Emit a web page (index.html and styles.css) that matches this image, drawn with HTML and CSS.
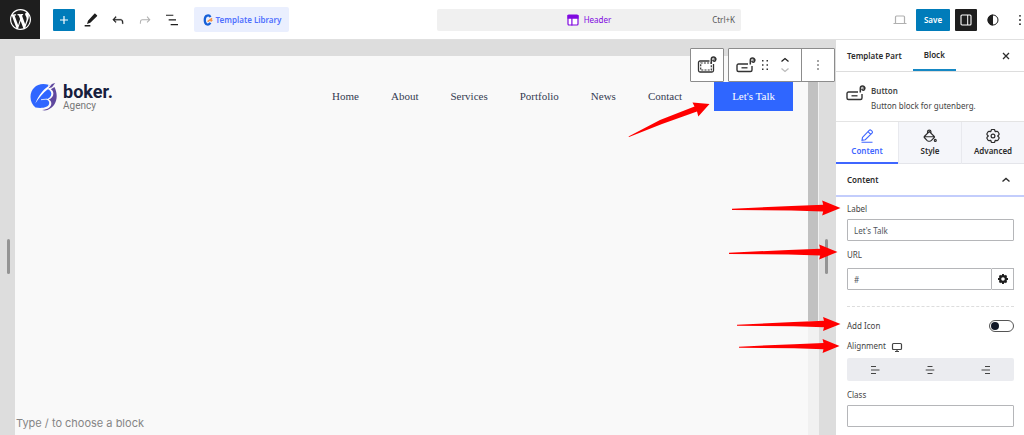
FILE: index.html
```html
<!DOCTYPE html>
<html lang="en">
<head>
<meta charset="utf-8">
<title>Header – Site Editor</title>
<link rel="stylesheet" href="styles.css">
</head>
<body>
<svg class="defs" aria-hidden="true">
  <symbol id="badge" viewBox="0 0 7 8">
    <path d="M1.300 7.500V3.500C1.300.3 5.800.3 5.800 3.200 5.800 5.600 3 5.800 2.800 3.700" fill="none" stroke="currentColor" stroke-width="1.500"/>
    <path d="M3.500 3h2.800" stroke="currentColor" stroke-width="1.200"/>
  </symbol>
  <symbol id="block-button" viewBox="0 0 20 16">
    <path d="M12 7H2.500C1.700 7 1 7.700 1 8.500V13c0 .8.700 1.500 1.500 1.500h12c.8 0 1.500-.7 1.500-1.500V9" fill="none" stroke="currentColor" stroke-width="1.400"/>
    <path d="M5.500 10.800h6" stroke="currentColor" stroke-width="1.300"/>
    <use href="#badge" x="13" y="0" width="7" height="8"/>
  </symbol>
  <symbol id="arrow" viewBox="0 0 110 16">
    <path d="M0 8.700 L60 6 92 4.600 91 .5 109.500 8 91 15.500 92 11.500 60 10.500 0 9.900Z" fill="#f00"/>
  </symbol>
</svg>

<header class="topbar">
  <a class="wp" href="#" aria-label="WordPress">
    <svg viewBox="0 0 20 20"><path fill="currentColor" d="M20 10c0-5.51-4.49-10-10-10C4.48 0 0 4.49 0 10c0 5.52 4.48 10 10 10 5.51 0 10-4.48 10-10zM7.78 15.37L4.37 6.22c.55-.02 1.17-.08 1.17-.08.5-.06.44-1.13-.06-1.11 0 0-1.45.11-2.37.11-.18 0-.37 0-.58-.01C4.12 2.69 6.87 1.11 10 1.11c2.33 0 4.45.87 6.05 2.34-.68-.11-1.65.39-1.65 1.58 0 .74.45 1.36.9 2.1.35.61.55 1.36.55 2.46 0 1.49-1.4 5-1.4 5l-3.03-8.37c.54-.02.82-.17.82-.17.5-.05.44-1.25-.06-1.22 0 0-1.44.12-2.38.12-.87 0-2.33-.12-2.33-.12-.5-.03-.56 1.2-.06 1.22l.92.08 1.26 3.41zM17.41 10c.24-.64.74-1.87.43-4.25.7 1.29 1.05 2.71 1.05 4.25 0 3.29-1.73 6.24-4.4 7.78.97-2.59 1.94-5.2 2.92-7.78zM6.1 18.09C3.12 16.65 1.11 13.53 1.11 10c0-1.3.23-2.48.72-3.59C3.25 10.3 4.67 14.2 6.1 18.09zm4.03-6.63l2.58 6.98c-.86.29-1.76.45-2.71.45-.79 0-1.57-.11-2.29-.33.81-2.38 1.62-4.74 2.42-7.1z"/></svg>
  </a>
  <div class="tools">
    <button class="square primary" aria-label="Add block"><svg class="i16" viewBox="0 0 16 16"><path d="M8 4v8M4 8h8" stroke="currentColor" stroke-width="1.200"/></svg></button>
    <button class="tool" aria-label="Edit"><svg class="i16" viewBox="0 0 24 24"><path fill="currentColor" d="M18.500 2.500l2.500 2.300c.4.400.4.900 0 1.400L11 16l-5 2 1.500-5L17 2.500c.5-.5 1-.5 1.500 0zM2.500 19.500H11v2.200H2.500z"/></svg></button>
    <button class="tool" aria-label="Undo"><svg class="i16" viewBox="0 0 24 24"><path fill="currentColor" stroke="currentColor" stroke-width=".4" d="M18.300 11.700c-.6-.6-1.400-.9-2.300-.9H6.700l2.900-3.300-1.100-1-4.500 5L8.500 16l1-1-2.700-2.700H16c.5 0 .9.200 1.300.5 1 1 1 3.400 1 4.500v.3h1.500v-.2c0-1.500 0-4.300-1.500-5.700z"/></svg></button>
    <button class="tool faint" aria-label="Redo" disabled><svg class="i16" viewBox="0 0 24 24"><path fill="currentColor" d="M15.600 6.500l-1.100 1 2.900 3.300H8c-.9 0-1.700.3-2.300.9-1.400 1.500-1.400 4.200-1.400 5.600v.2h1.500v-.3c0-1.100 0-3.500 1-4.500.3-.3.7-.5 1.300-.5h9.200L14.500 15l1.100 1.100 4.600-4.600-4.600-5z"/></svg></button>
    <button class="tool" aria-label="Document overview"><svg class="i16" viewBox="0 0 24 24"><path fill="currentColor" d="M3 4h11v1.700H3zM7 11h11v1.700H7zM21 18H10v1.700h11z"/></svg></button>
    <button class="library"><svg class="i12" viewBox="0 0 12 14"><path d="M8.800 3.700C7.800 1 2.200.3 2.200 7s5.200 6.200 6.600 3.300" fill="none" stroke="#1560d8" stroke-width="2.600"/><path d="M5.500 8.800l5.300-3.600M9 8.500l2-1.500" stroke="#f59042" stroke-width="1.800"/></svg>Template Library</button>
  </div>
  <button class="command">
    <span class="command-title"><svg class="i12" viewBox="0 0 12 12"><rect x="1" y="1" width="10" height="10" rx="1" fill="#fff" stroke="#8009e0" stroke-width="1.200"/><path d="M.5 1h11v3.700H.5zM4.300 4.500h1.200v7H4.300z" fill="#8009e0"/></svg>Header</span>
    <span class="shortcut">Ctrl+K</span>
  </button>
  <div class="actions">
    <button class="tool faint" aria-label="View"><svg class="i16" viewBox="0 0 16 16"><path d="M3.500 11V5c0-.6.4-1 1-1h7c.6 0 1 .4 1 1v6M1.500 11.500h13" fill="none" stroke="currentColor" stroke-width="1.200"/></svg></button>
    <button class="save">Save</button>
    <button class="square dark" aria-label="Settings"><svg class="i12" viewBox="0 0 12 12"><rect x="1" y="1" width="10" height="10" rx="1" fill="none" stroke="currentColor" stroke-width="1.100"/><path d="M7.700 1v10" stroke="currentColor"/></svg></button>
    <button class="tool" aria-label="Styles"><svg class="i12" viewBox="0 0 12 12"><circle cx="6" cy="6" r="5" fill="none" stroke="currentColor" stroke-width="1"/><path d="M6 .5a5.500 5.500 0 0 0 0 11z" fill="currentColor"/></svg></button>
    <button class="tool" aria-label="Options"><svg class="i16" viewBox="0 0 16 16" fill="currentColor"><circle cx="8" cy="3.800" r=".9"/><circle cx="8" cy="8" r=".9"/><circle cx="8" cy="12.200" r=".9"/></svg></button>
  </div>
</header>

<div class="workspace">
  <main class="stage">
    <div class="gutter"><span class="handle"></span></div>
    <div class="page">
      <div class="site-header">
        <a class="brand" href="#">
          <svg class="brand-mark" viewBox="0 0 28 28">
            <path d="M24.500 4C28.500 12 27.500 23 17.500 27c-2 .6-4 .5-5.500 0 6-.2 9.500-3 9.300-6.700-.1-1.900-1-3-2.500-3.800 3.200-1.500 4.800-3.700 4.500-6.500-.2-1.700-1-2.800-2.500-3.700z" fill="#5f489e"/>
            <path d="M25.200 0C21.500.8 18.500 3 16.500 5.800l5.500-1.600z" fill="#5f489e"/>
            <path d="M18.500 1.800C9-1.500.5 4.500.5 14c0 4.500 2 8.300 5 10.600 6.500 1 13.200.2 13.700-4.300.2-2-1-3.300-3.200-3.800 3.700-1.200 5.600-3.500 5.300-6.300C21 8 19.300 6.500 17 6z" fill="#2f66ff"/>
            <path d="M21.500 1.500C14 5 8.500 12 5.300 20.500 9.500 14 13.500 9.500 17.500 6.500z" fill="#fff"/>
            <path d="M11 16.700l6-.6" stroke="#fff" stroke-width=".8"/>
          </svg>
          <span class="brand-text"><strong>boker.</strong><span>Agency</span></span>
        </a>
        <nav class="nav">
          <a href="#">Home</a><a href="#">About</a><a href="#">Services</a><a href="#">Portfolio</a><a href="#">News</a><a href="#">Contact</a>
          <a class="cta" href="#">Let's Talk</a>
        </nav>
      </div>
      <p class="prompt">Type / to choose a block</p>
    </div>
    <div class="scroll"><span class="thumb"></span></div>
    <div class="gutter right"><span class="handle"></span></div>

    <div class="block-tools">
      <button class="box parent" aria-label="Select parent"><svg class="i20" viewBox="0 0 20 20"><path d="M12.500 6H3c-.8 0-1.500.7-1.500 1.500v8c0 .8.700 1.500 1.500 1.500h12c.8 0 1.500-.7 1.500-1.500V9" fill="none" stroke="currentColor" stroke-width="1.300"/><rect x="3.700" y="8" width="10.600" height="7" fill="none" stroke="currentColor" stroke-width="1.200" stroke-dasharray="2 1.200"/><use href="#badge" x="13" y="1" width="7" height="8"/></svg></button>
      <div class="box group">
        <button aria-label="Button block"><svg class="block-icon"><use href="#block-button"/></svg></button>
        <button aria-label="Drag"><svg class="drag" viewBox="0 0 8 12" fill="currentColor"><path d="M1 1h1.500v1.500H1zM5.500 1H7v1.500H5.500zM1 5.200h1.500v1.500H1zM5.500 5.200H7v1.500H5.500zM1 9.500h1.500V11H1zM5.500 9.500H7V11H5.500z"/></svg></button>
        <button class="movers" aria-label="Move"><svg viewBox="0 0 10 18" fill="none" stroke-width="1.300"><path d="M1.500 5.500L5 2.500l3.500 3" stroke="#1e1e1e"/><path d="M1.500 12.500l3.500 3 3.500-3" stroke="#bbb"/></svg></button>
        <button class="more" aria-label="Options"><svg class="i16" viewBox="0 0 16 16" fill="currentColor"><circle cx="8" cy="4" r=".8"/><circle cx="8" cy="8" r=".8"/><circle cx="8" cy="12" r=".8"/></svg></button>
      </div>
    </div>
  </main>

  <aside class="sidebar">
    <div class="tabs">
      <button>Template Part</button><button class="active">Block</button>
      <button class="close" aria-label="Close"><svg class="i12" viewBox="0 0 12 12"><path d="M3 3l6 6M9 3l-6 6" stroke="currentColor" stroke-width="1.300"/></svg></button>
    </div>
    <section class="card">
      <svg class="block-icon"><use href="#block-button"/></svg>
      <div><h2>Button</h2><p>Button block for gutenberg.</p></div>
    </section>
    <div class="modes">
      <button class="active"><svg class="i16" viewBox="0 0 16 16" fill="none" stroke="currentColor" stroke-width="1.100"><path d="M3.500 9.300l6.700-7c.6-.6 1.300-.6 1.900 0l.9.900c.6.600.6 1.300 0 1.900l-6.700 6.600-3.300.7zM9 3.600l2.700 2.700M2.500 14.300h11"/></svg>Content</button>
      <button><svg class="i16" viewBox="0 0 16 16" fill="none" stroke="currentColor" stroke-width="1.100"><path d="M5.500 5V3.800c0-2.300 3.500-2.300 3.500 0V5M2.300 8.500L7.300 3.500l5 5c.4.400.3.700 0 1L9.200 12.600c-.4.400-.8.600-1.300.6H6.500c-.5 0-.9-.2-1.300-.6L2.300 9.500c-.3-.3-.3-.7 0-1zM2 8.700h10.500"/><circle cx="13.300" cy="12.400" r="1"/></svg>Style</button>
      <button><svg class="i16" viewBox="0 0 16 16" fill="none" stroke="currentColor" stroke-width="1.200" stroke-linejoin="round"><path d="M6.300 2l.5-.5h2.400l.5.500.5 1.700 1.800-.4.900.4 1.200 2-.1.900L12.700 8l1.300 1.400.1.900-1.200 2-.9.400-1.800-.4-.5 1.700-.5.500H6.800l-.5-.5-.5-1.700-1.800.4-.9-.4-1.200-2 .1-.9L3.300 8 2 6.600l-.1-.9 1.200-2 .9-.4 1.800.4z"/><circle cx="8" cy="8" r="1.900"/></svg>Advanced</button>
    </div>
    <button class="panel-title">Content<svg class="i12" viewBox="0 0 12 12"><path d="M2.500 7.500L6 4.500l3.500 3" fill="none" stroke="currentColor" stroke-width="1.400"/></svg></button>
    <form class="fields">
      <label for="label">Label</label>
      <input class="text" id="label" type="text" value="Let's Talk">
      <label for="url">URL</label>
      <div class="url"><input class="text" id="url" type="text" value="#"><button type="button" aria-label="Link settings"><svg class="i12" viewBox="0 0 12 12"><circle cx="6" cy="6" r="2.900" fill="none" stroke="#1e1e1e" stroke-width="2.200"/><path d="M6 1v2M6 9v2M1 6h2M9 6h2M2.500 2.500l1.300 1.300M8.200 8.200l1.300 1.300M2.500 9.500l1.300-1.300M8.200 3.800l1.300-1.300" stroke="#1e1e1e" stroke-width="1.900"/></svg></button></div>
      <div class="row"><label for="icon">Add Icon</label><input class="toggle" id="icon" type="checkbox" role="switch"></div>
      <div class="align-label"><span id="align">Alignment</span><svg class="i12" viewBox="0 0 12 12"><path d="M2.500 3.500h7c.5 0 1 .4 1 1v4c0 .6-.5 1-1 1h-7c-.5 0-1-.4-1-1v-4c0-.6.5-1 1-1zM4 11.500h4M6 9.500v2" fill="none" stroke="currentColor" stroke-width="1.200"/></svg></div>
      <div class="align" role="group" aria-labelledby="align">
        <button type="button" aria-label="Left"><svg class="i12" viewBox="0 0 12 12"><path d="M2 2.500h5M2 6h8.500M2 9.500h5" stroke="currentColor" stroke-width="1.100"/></svg></button>
        <button type="button" aria-label="Center"><svg class="i12" viewBox="0 0 12 12"><path d="M3.500 2.500h5M1.700 6h8.600M3.500 9.500h5" stroke="currentColor" stroke-width="1.100"/></svg></button>
        <button type="button" aria-label="Right"><svg class="i12" viewBox="0 0 12 12"><path d="M5 2.500h5M1.500 6H10M5 9.500h5" stroke="currentColor" stroke-width="1.100"/></svg></button>
      </div>
      <label for="class">Class</label>
      <input class="text" id="class" type="text">
    </form>
  </aside>
</div>

<svg class="arrows" viewBox="0 0 424 400" aria-hidden="true">
  <path d="M28.500 136.500L60 120 94.500 106.500 92.500 102.500 109.500 104 98.300 116.500 97 111.500 62 124 29 137Z" fill="#f00"/>
  <use href="#arrow" x="132" y="200" width="109" height="16"/>
  <use href="#arrow" x="129" y="244" width="109" height="16"/>
  <use href="#arrow" x="137" y="316" width="104" height="16"/>
  <use href="#arrow" x="139" y="338" width="101" height="16"/>
</svg>
</body>
</html>
```
FILE: styles.css
```css
* { box-sizing: border-box; }
html, body { height: 100%; }
body {
  margin: 0;
  display: flex;
  flex-direction: column;
  position: relative;
  overflow: hidden;
  background: #fff;
  color: #1e1e1e;
  font: 8px/12px "Noto Sans", "Open Sans", sans-serif;
}
button {
  display: flex;
  align-items: center;
  justify-content: center;
  padding: 0;
  border: 0;
  background: none;
  color: inherit;
  font: inherit;
}
a { color: inherit; text-decoration: none; }
h2, p { margin: 0; }
svg { flex: none; display: block; }
.defs { position: absolute; width: 0; height: 0; }
.i12 { width: 12px; height: 12px; }
.i16 { width: 16px; height: 16px; }
.i20 { width: 20px; height: 20px; }
.block-icon { width: 20px; height: 16px; color: #333; }

/* Top bar */
.topbar {
  flex: none;
  display: grid;
  grid-template-columns: 40px 397fr 304px 283fr;
  align-items: center;
  height: 40px;
  border-bottom: 1px solid #e0e0e0;
}
.wp {
  display: flex;
  align-items: center;
  justify-content: center;
  height: 39px;
  background: #1e1e1e;
  color: #fff;
}
.wp svg { width: 21px; height: 21px; }
.tools { display: flex; align-items: center; gap: 11px; padding-left: 13px; }
.tool { width: 16px; height: 22px; }
.square { width: 22px; height: 22px; border-radius: 1px; }
.tools .square { margin-right: -3px; }
.primary, .save { background: #007cba; color: #fff; }
.dark { background: #1e1e1e; color: #fff; }
.faint { color: #b0b0b0; }
.library {
  width: 95px;
  height: 25px;
  margin-left: 3px;
  gap: 2px;
  border-radius: 2px;
  background: #eaeffe;
  color: #5070ff;
  font-weight: 600;
  white-space: nowrap;
}
.command {
  display: grid;
  grid-template-columns: 1fr auto 1fr;
  height: 22px;
  padding: 0 6px;
  border-radius: 2px;
  background: #f0f0f0;
}
.command-title { grid-column: 2; display: flex; align-items: center; gap: 5px; color: #8009e0; }
.shortcut { justify-self: end; color: #555; }
.actions { display: flex; align-items: center; justify-content: flex-end; gap: 5px; overflow: hidden; }
.actions .tool:nth-child(1) { margin-right: 3px; }
.actions .tool:nth-child(4) { margin: 0 6px 0 3px; }
.actions .tool:nth-child(5) { margin-right: -4px; }
.save { width: 34px; height: 22px; border-radius: 1px; font-weight: 600; }

/* Canvas */
.workspace { flex: 1; min-height: 0; display: flex; }
.stage { flex: 1; display: flex; position: relative; padding-top: 16px; background: #ddd; }
.gutter { width: 15px; display: flex; align-items: center; justify-content: flex-end; padding-top: 22px; }
.gutter.right { width: 17px; }
.handle { width: 3px; height: 35px; margin-right: 5px; border-radius: 2px; background: #949494; }
.right .handle { margin-right: 8px; }
.page { flex: 1; display: flex; flex-direction: column; justify-content: space-between; padding: 26px 15px 4px; background: #f9f9f9; }
.site-header { display: flex; align-items: center; justify-content: space-between; }
.brand { display: flex; align-items: center; gap: 5px; }
.brand-mark { width: 28px; height: 28px; }
.brand-text { display: flex; flex-direction: column; font-family: Roboto, sans-serif; }
.brand-text strong { color: #17203d; font-size: 18px; line-height: 18px; }
.brand-text span { color: #777; font-size: 10px; line-height: 10px; }
.nav { display: flex; align-items: center; gap: 32px; color: #353b52; font: 11px/15px "Liberation Serif", serif; }
.cta { padding: 7px 18px; background: #2f66ff; color: #fff; }
.prompt { margin-left: -14px; color: #858585; font: 11px/15px Inter, sans-serif; }
.scroll { width: 11px; background: #f1f1f1; }
.thumb { display: block; width: 10px; height: 70%; background: #c1c1c1; }

/* Floating block toolbar */
.block-tools { position: absolute; top: 8px; right: 1px; display: flex; gap: 4px; color: #333; }
.box { height: 34px; border: 1px solid #8c8c8c; border-radius: 1px; background: #fff; }
.parent { width: 34px; }
.group { display: flex; width: 107px; padding-left: 7px; }
.group button { height: 32px; }
.drag { width: 8px; height: 12px; margin-left: 5px; }
.movers { flex: 1; }
.movers svg { width: 10px; height: 18px; }
.more { width: 33px; border-left: 1px solid #8c8c8c; }

/* Sidebar */
.sidebar { width: 188px; display: flex; flex-direction: column; overflow: hidden; background: #fff; color: #2c2c2c; }
.sidebar > * { flex: none; }
.tabs { display: flex; height: 32px; border-bottom: 1px solid #ddd; font-weight: 600; }
.tabs button { padding: 0 11px; }
.tabs .active { border-bottom: 2px solid #1688c4; }
.tabs .close { margin-left: auto; padding: 0 12px; }
.card { display: flex; gap: 5px; height: 50px; padding: 13px 10px 0; border-bottom: 1px solid #e4e4e4; color: #444; }
.card h2 { font-size: 8px; line-height: 12px; font-weight: 600; margin-bottom: 3px; }
.modes { display: grid; grid-template-columns: repeat(3, 1fr); gap: 1px; height: 42px; background: #e8e9ee; }
.modes button { flex-direction: column; gap: 1px; border-bottom: 1px solid #e4e5ea; background: #f5f6fa; font-weight: 600; }
.modes .active { border-bottom: 2px solid #3f66ff; background: #fff; color: #3f66ff; }
.panel-title { justify-content: space-between; height: 33px; padding: 0 12px 0 11px; border-bottom: 2px solid #c3cdfc; font-weight: 600; }
.fields { display: flex; flex-direction: column; padding: 6px 10px 8px 11px; color: #444; }
.text { width: 100%; height: 22px; margin: 4px 0 8px; padding: 0 6px; border: 1px solid #b5b6b9; border-radius: 1px; background: #fff; color: #50555b; font: inherit; }
.url { display: flex; margin-top: 7px; padding-bottom: 16px; border-bottom: 1px dashed #ddd; }
.url .text { margin: 0; }
.url button { flex: none; width: 22px; border: 1px solid #b5b6b9; border-left: 0; }
.row { display: flex; align-items: center; justify-content: space-between; margin-top: 13px; }
.toggle { appearance: none; width: 25px; height: 12px; margin: 0; padding: 1px; border: 1px solid #555; border-radius: 6px; background: #fff; }
.toggle::before { content: ""; display: block; width: 8px; height: 8px; border-radius: 50%; background: #111827; }
.toggle:checked::before { margin-left: auto; }
.align-label { display: flex; align-items: center; gap: 5px; margin-top: 8px; }
.align { display: grid; grid-template-columns: repeat(3, 1fr); height: 23px; margin: 6px 0 8px; border-radius: 2px; background: #ebecf0; }

/* Callouts */
.arrows { position: absolute; top: 0; right: 0; width: 424px; height: 400px; pointer-events: none; }
```
